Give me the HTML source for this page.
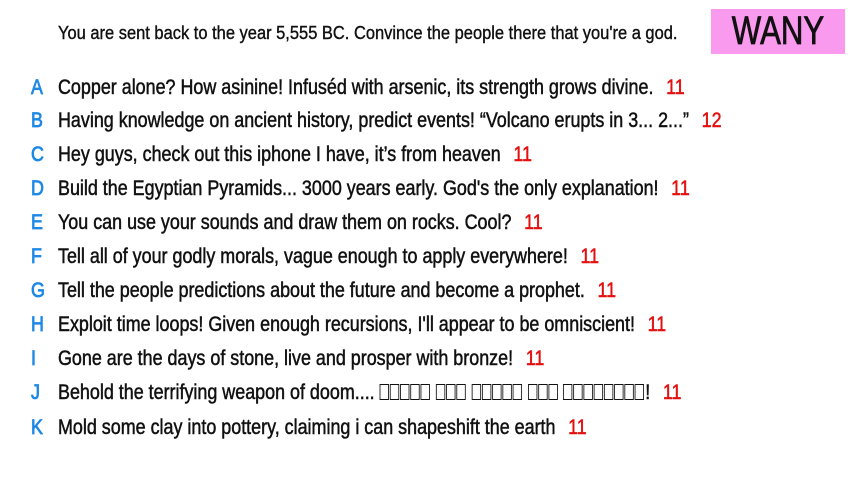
<!DOCTYPE html>
<html><head><meta charset="utf-8"><style>
html,body{margin:0;padding:0;background:#fff;width:853px;height:480px;overflow:hidden}
body{font-family:"Liberation Sans",sans-serif;color:#111;position:relative}
.h{position:absolute;left:58px;top:22px;font-size:18.5px;white-space:nowrap;transform:scaleX(0.89);transform-origin:0 0;-webkit-text-stroke:0.4px #111}
.w{position:absolute;left:711px;top:9px;width:134px;height:45px;background:#f99aee}
.w span{position:absolute;left:0;width:134px;text-align:center;font-size:40px;line-height:45px;color:#111;transform:scaleX(0.78);-webkit-text-stroke:0.8px #111}
.r{position:absolute;left:0;height:30px;line-height:30px;font-size:21px;white-space:nowrap;-webkit-text-stroke:0.5px currentColor}
.l{position:absolute;left:31px;color:#1e88e5;width:20px;transform:scaleX(0.85);transform-origin:0 0;-webkit-text-stroke:0.8px #1e88e5}
.t{position:absolute;left:58px;transform:scaleX(0.853);transform-origin:0 0}
.n{color:#e31010;margin-left:9px}
.b{display:inline-block;width:9px;height:14px;border:1px solid #111;margin-right:1px;vertical-align:-1px;-webkit-text-stroke:0}
</style></head><body>
<div class="h">You are sent back to the year 5,555 BC. Convince the people there that you're a god.</div>
<div class="w"><span>WANY</span></div>
<div class="r" style="top:73px"><span class="l">A</span><span class="t">Copper alone? How asinine! Infuséd with arsenic, its strength grows divine. <span class="n">11</span></span></div>
<div class="r" style="top:106px"><span class="l">B</span><span class="t">Having knowledge on ancient history, predict events! “Volcano erupts in 3... 2...” <span class="n">12</span></span></div>
<div class="r" style="top:140px"><span class="l">C</span><span class="t">Hey guys, check out this iphone I have, it’s from heaven <span class="n">11</span></span></div>
<div class="r" style="top:174px"><span class="l">D</span><span class="t">Build the Egyptian Pyramids... 3000 years early. God's the only explanation! <span class="n">11</span></span></div>
<div class="r" style="top:208px"><span class="l">E</span><span class="t">You can use your sounds and draw them on rocks. Cool? <span class="n">11</span></span></div>
<div class="r" style="top:242px"><span class="l">F</span><span class="t">Tell all of your godly morals, vague enough to apply everywhere! <span class="n">11</span></span></div>
<div class="r" style="top:276px"><span class="l">G</span><span class="t">Tell the people predictions about the future and become a prophet. <span class="n">11</span></span></div>
<div class="r" style="top:310px"><span class="l">H</span><span class="t">Exploit time loops! Given enough recursions, I'll appear to be omniscient! <span class="n">11</span></span></div>
<div class="r" style="top:344px"><span class="l">I</span><span class="t">Gone are the days of stone, live and prosper with bronze! <span class="n">11</span></span></div>
<div class="r" style="top:378px"><span class="l">J</span><span class="t">Behold the terrifying weapon of doom.... <span class="b"></span><span class="b"></span><span class="b"></span><span class="b"></span><span class="b"></span> <span class="b"></span><span class="b"></span><span class="b"></span> <span class="b"></span><span class="b"></span><span class="b"></span><span class="b"></span><span class="b"></span> <span class="b"></span><span class="b"></span><span class="b"></span> <span class="b"></span><span class="b"></span><span class="b"></span><span class="b"></span><span class="b"></span><span class="b"></span><span class="b"></span><span class="b"></span>! <span class="n">11</span></span></div>
<div class="r" style="top:413px"><span class="l">K</span><span class="t">Mold some clay into pottery, claiming i can shapeshift the earth <span class="n">11</span></span></div>
</body></html>
